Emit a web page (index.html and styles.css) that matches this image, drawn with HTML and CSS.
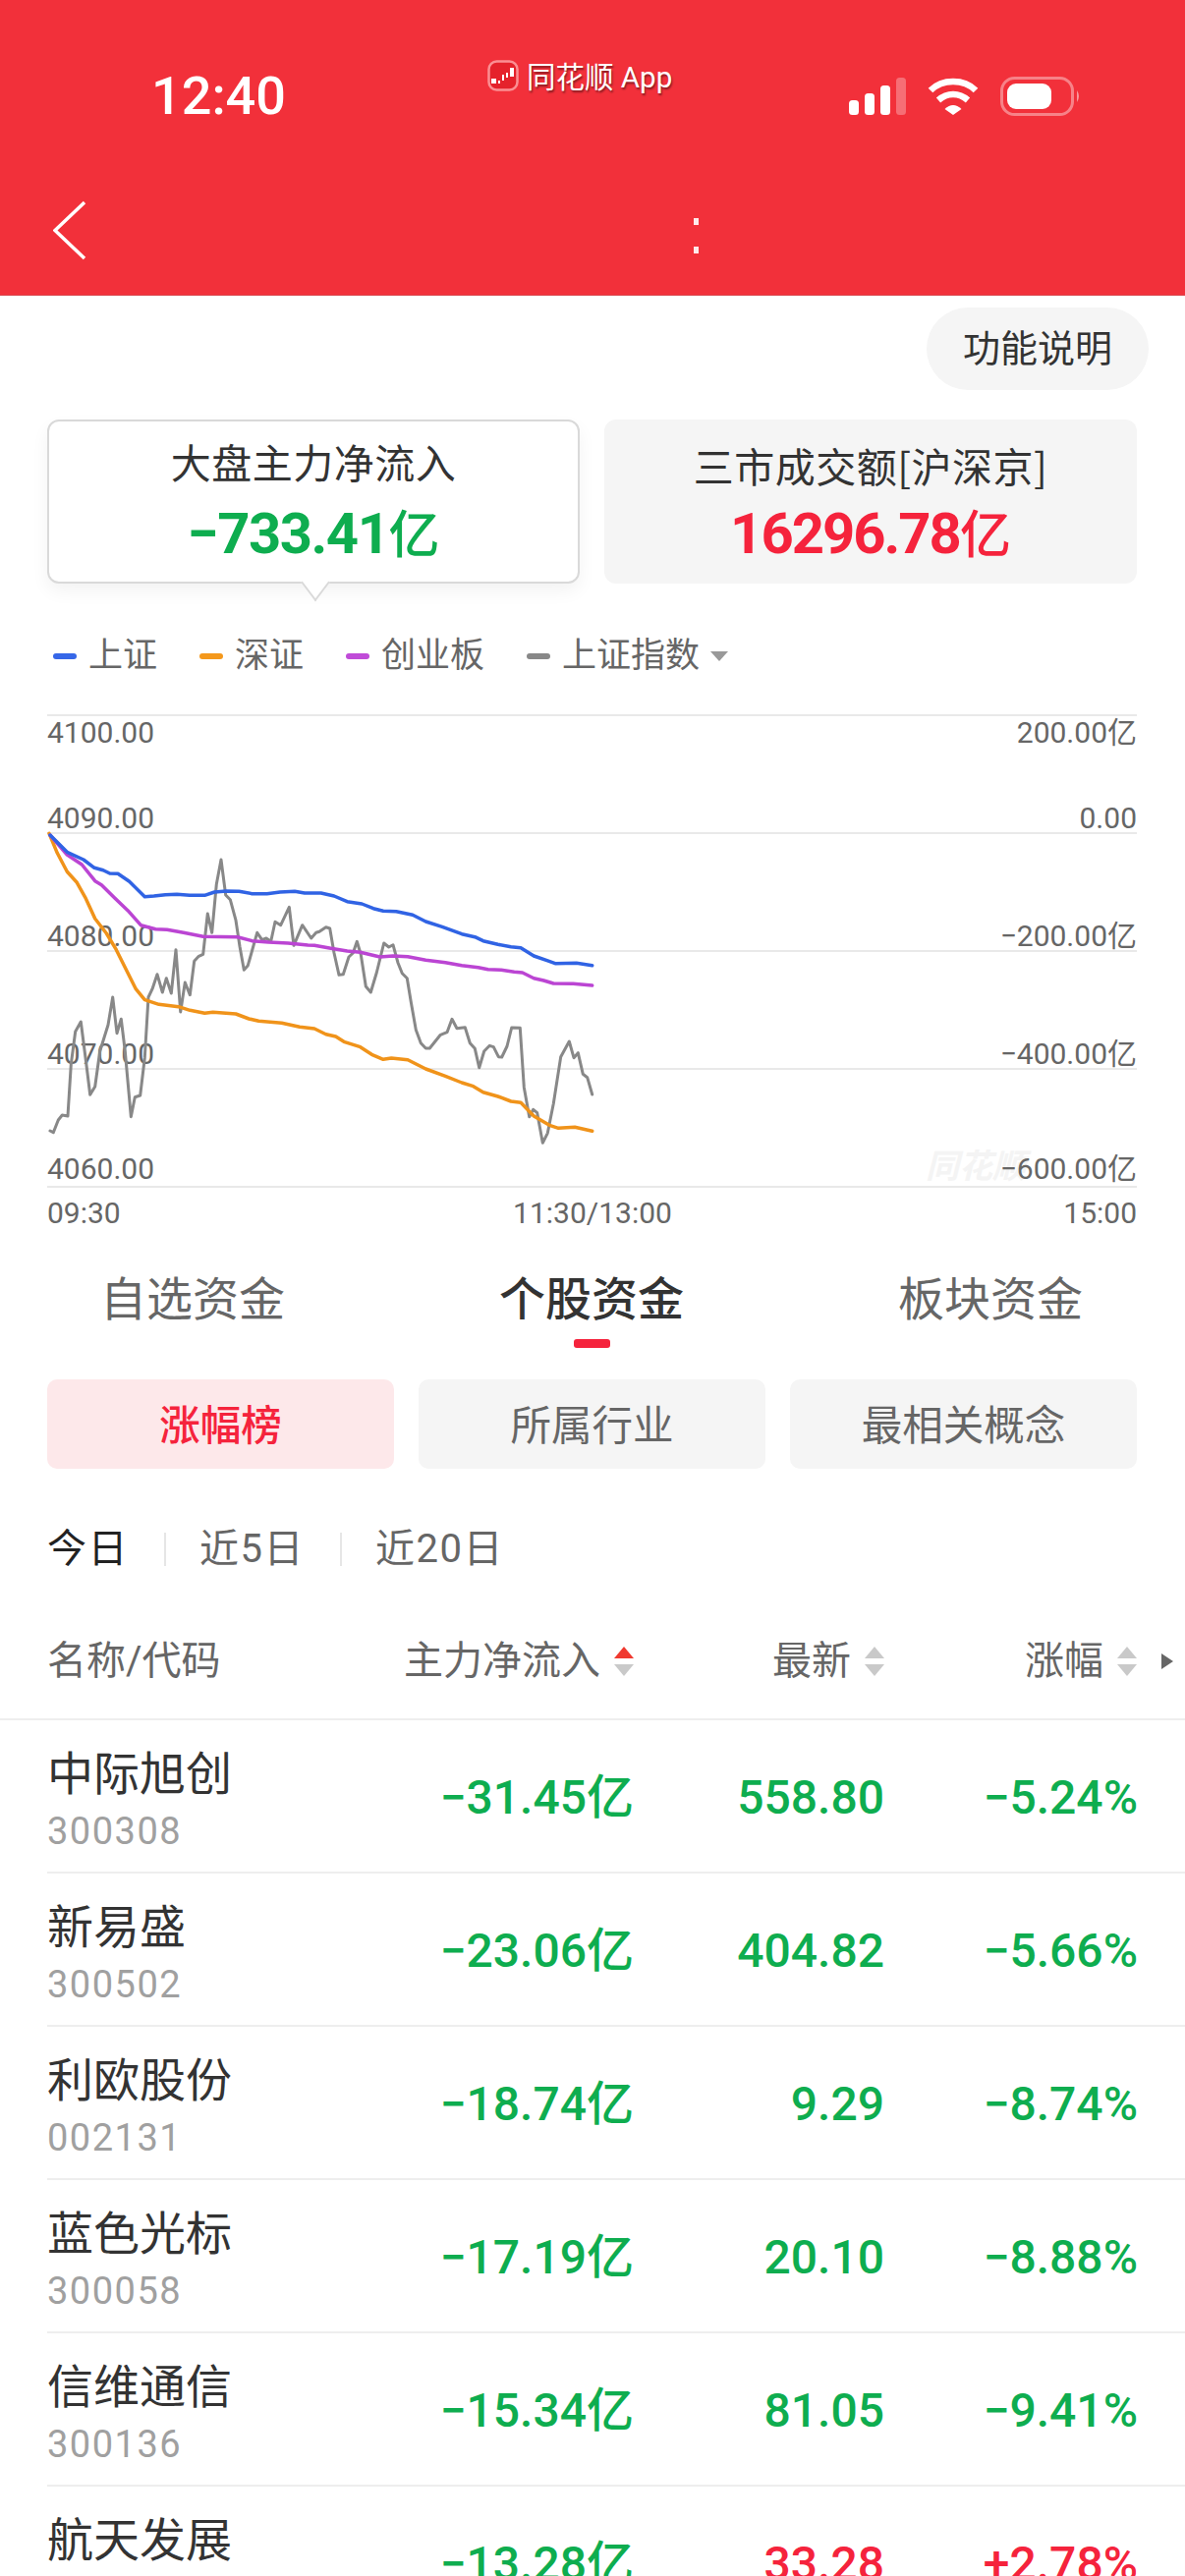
FILE: index.html
```html
<!DOCTYPE html>
<html lang="zh-CN">
<head>
    <meta charset="UTF-8" />
    <meta name="viewport" content="width=device-width, initial-scale=1" />
    <title>资金流向</title>
    <link rel="stylesheet" href="styles.css">
</head>
<body>
    <header class="top">
        <div class="status-bar">
            <span class="clock">12:40</span>
            <div class="brand">
                <svg class="brand-logo" width="32" height="32" viewBox="0 0 32 32">
                    <rect x="1.5" y="1.5" width="29" height="29" rx="8" fill="#e5222b" stroke="#fb8f93" stroke-width="2.5"/>
                    <path d="M4 19h5v5H4zM11 21h2v3h-2zM15 15h2v6h-2zM19 13h2v5h-2zM23 8h4v9h-4z" fill="#fff"/>
                </svg>
                <span class="brand-name">同花顺 App</span>
            </div>
            <div class="status-icons">
                <svg width="58" height="38" viewBox="0 0 58 38">
                    <rect x="0" y="23" width="10" height="15" rx="3.5" fill="#fff"/>
                    <rect x="16" y="16" width="10" height="22" rx="3.5" fill="#fff"/>
                    <rect x="32" y="8" width="10" height="30" rx="3.5" fill="#fff"/>
                    <rect x="48" y="0" width="10" height="38" rx="3.5" fill="#fff" opacity=".3"/>
                </svg>
                <svg width="52" height="38" viewBox="0 0 52 38">
                    <path d="M3 13C15 1 37 1 49 13" fill="none" stroke="#fff" stroke-width="6.5"/>
                    <path d="M11 23C20 15 32 15 41 23" fill="none" stroke="#fff" stroke-width="6.5"/>
                    <path d="M17.5 32Q26 24 34.5 32L26 38Z" fill="#fff"/>
                </svg>
                <svg width="82" height="40" viewBox="0 0 82 40">
                    <rect x="1.5" y="1.5" width="72" height="37" rx="13" fill="none" stroke="#fff" stroke-opacity=".4" stroke-width="3"/>
                    <rect x="7" y="7" width="45" height="26" rx="9" fill="#fff"/>
                    <path d="M78 14q4 6 0 12z" fill="#fff" opacity=".5"/>
                </svg>
            </div>
        </div>
        <nav class="nav-bar">
            <svg class="back" width="34" height="62" viewBox="0 0 34 62">
                <path d="M32 2L2 30.500L32 59" fill="none" stroke="#fff" stroke-width="3.500"/>
            </svg>
            <div class="nav-title"><i></i><i></i></div>
        </nav>
    </header>

    <main>
        <div class="help-row">
            <button class="help-btn">功能说明</button>
        </div>

        <div class="summary">
            <div class="summary-card active">
                <div class="summary-title">大盘主力净流入</div>
                <div class="summary-value down">−733.41<em>亿</em></div>
            </div>
            <div class="summary-card">
                <div class="summary-title cjk">三市成交额[沪深京]</div>
                <div class="summary-value up">16296.78<em>亿</em></div>
            </div>
        </div>

        <div class="legend">
            <span class="legend-item"><i class="dash blue"></i>上证</span>
            <span class="legend-item"><i class="dash orange"></i>深证</span>
            <span class="legend-item"><i class="dash purple"></i>创业板</span>
            <span class="legend-item"><i class="dash gray"></i>上证指数<b class="caret"></b></span>
        </div>

        <svg class="chart" width="1206" height="540" viewBox="0 720 1206 540">
            <g class="grid">
                <line x1="48" x2="1157" y1="728" y2="728"/>
                <line x1="48" x2="1157" y1="848" y2="848"/>
                <line x1="48" x2="1157" y1="968" y2="968"/>
                <line x1="48" x2="1157" y1="1088" y2="1088"/>
                <line x1="48" x2="1157" y1="1208" y2="1208"/>
            </g>
            <text class="watermark" x="942" y="1199">同花顺</text>
            <g class="axis">
                <text x="48" y="756">4100.00</text>
                <text x="48" y="843">4090.00</text>
                <text x="48" y="963">4080.00</text>
                <text x="48" y="1083">4070.00</text>
                <text x="48" y="1200">4060.00</text>
                <text x="48" y="1245">09:30</text>
                <text x="603" y="1245" text-anchor="middle">11:30/13:00</text>
            </g>
            <g class="axis" text-anchor="end">
                <text x="1157" y="756">200.00亿</text>
                <text x="1157" y="843">0.00</text>
                <text x="1157" y="963">−200.00亿</text>
                <text x="1157" y="1083">−400.00亿</text>
                <text x="1157" y="1200">−600.00亿</text>
                <text x="1157" y="1245">15:00</text>
            </g>
            <polyline class="line line-gray" points="51,1151 54.300,1152.700 59.300,1140 63.300,1135 69,1136 72.300,1083.300 76.700,1050 82.300,1040 88.300,1086.700 91.700,1114.300 96.700,1106 101.700,1070 110,1043.300 114.700,1015 119,1051.700 123.300,1037.300 127.300,1070 133.300,1136.700 137.300,1116.700 142.700,1115 147.300,1076.700 151,1015 155,1006.700 160,991.700 165.300,1010 169.300,995.700 174.300,1011 179,966.700 183.700,1030 188.300,1000 193.300,1012.700 197.700,978.300 202.300,973.300 206.700,971.300 211.300,930 215.700,949.300 220.300,900 225,875 229.700,911 234.300,915.700 240,936.700 244,963.300 248.300,987.300 252.300,982.700 261.700,949.300 266.700,956.700 271,955 275.700,958.300 280,938.300 285.700,941.700 294.300,923.300 299,962.300 307.700,941.700 316.700,955 321.700,949.300 325,948.300 331.700,943.700 335.700,945 340,970 345,992.300 349.300,991.700 355,974 359.300,970 363.300,958.300 367.300,971.700 372.300,1004 377.300,1010 383.300,990 390.700,960 395.700,964 400,961.700 405,980 409.300,990.700 414.300,995.700 418.300,1020 423.300,1048.300 428.300,1061.700 433.300,1067 437.300,1067 448.300,1053.300 455,1050.700 460,1037.300 465,1046.700 473.300,1045.700 478.300,1061.700 483.300,1067.300 487.700,1086.700 492.700,1070 498.300,1064.300 502.300,1065.700 507.300,1075.700 510.700,1076 516,1065 520.700,1046 529.300,1046.300 533.300,1106.700 538.700,1136.700 542.700,1129.300 546.700,1132.700 552.300,1163.300 557.300,1153.300 563.300,1123.300 570.700,1075.700 579.300,1060 584,1076.700 588.300,1071.700 593.300,1093.300 597.700,1096.700 602.700,1114"/>
            <polyline class="line line-orange" points="50,848.300 58.300,868.300 68.300,887.300 78.300,898.300 86.700,913.300 96.700,935 108.300,950 118.300,966.700 128.300,986.700 138.300,1006.700 147.300,1017.700 161.700,1022.300 181.700,1024.700 193.300,1028.300 208.300,1031.300 216.700,1030.300 240,1032 253.300,1037 263.300,1039.300 286.700,1041.300 305,1045.300 320,1047 331.700,1052.700 341.700,1055 350,1060.300 366.700,1065.700 378.300,1073.300 390,1078.300 398.300,1077 415,1078.700 433.300,1088 453.300,1095.300 470,1102 481.700,1105.700 491.700,1111.700 506.700,1116 520,1121 530,1122.300 543.300,1136 560,1145.700 568.300,1148.300 585,1147.300 602.700,1151.300"/>
            <polyline class="line line-purple" points="51,850 68.300,870 83.300,880 96.700,896.700 103.300,900.700 116.700,914 130,926.700 143.300,941.700 158.300,945.700 170,946.300 186.700,949.300 206.700,953.300 241.700,953.700 256.700,957.700 273.300,959 293.300,960 313.300,962 320,962.300 336.700,965.300 353.300,968 366.700,969.300 386.700,974 400,973 415,973.700 433.300,977.300 453.300,979.700 470,982.700 486.700,984.700 496.700,986.700 510,987.300 523.300,989.300 531.700,990 543.300,995.700 553.300,998 563.300,1001 583.300,1001.300 602.700,1003"/>
            <polyline class="line line-blue" points="51,850 68.300,867.300 85,875 96,883.300 105,885.700 111.700,889 120,889.300 131.700,897.300 147.300,912.700 156.700,912 168.300,910.700 180,910.300 193,911.300 208.300,911.300 218.300,908 230,907 243.300,907.300 256.700,909.700 271.700,909.700 285,908 300,907.300 310,909 326.700,909 340,912 353.300,917.700 368.300,920 380,924.700 390,927.300 403.300,927.700 420,931.300 433.300,938 450,943.300 470,950.700 483.300,953.700 491.700,957.700 506.700,961.300 520,963.700 530,964.700 543.300,973 556.700,977.700 565,980.700 586.700,980.300 602.700,982.700"/>
        </svg>

        <div class="tabs">
            <div class="tab">自选资金</div>
            <div class="tab active">个股资金</div>
            <div class="tab">板块资金</div>
        </div>

        <div class="sub-tabs">
            <div class="sub-tab active">涨幅榜</div>
            <div class="sub-tab">所属行业</div>
            <div class="sub-tab">最相关概念</div>
        </div>

        <div class="periods">
            <span class="period active">今日</span>
            <span class="period">近5日</span>
            <span class="period">近20日</span>
        </div>

        <div class="table-head">
            <span>名称/代码</span>
            <span class="sort">主力净流入<b class="sorter on"></b></span>
            <span class="sort">最新<b class="sorter"></b></span>
            <span class="sort">涨幅<b class="sorter"></b></span>
            <span class="more"></span>
        </div>

        <div class="row">
            <div class="stock"><div class="stock-name">中际旭创</div><div class="stock-code">300308</div></div>
            <div class="num down">−31.45亿</div>
            <div class="num down">558.80</div>
            <div class="num down">−5.24%</div>
        </div>
        <div class="row">
            <div class="stock"><div class="stock-name">新易盛</div><div class="stock-code">300502</div></div>
            <div class="num down">−23.06亿</div>
            <div class="num down">404.82</div>
            <div class="num down">−5.66%</div>
        </div>
        <div class="row">
            <div class="stock"><div class="stock-name">利欧股份</div><div class="stock-code">002131</div></div>
            <div class="num down">−18.74亿</div>
            <div class="num down">9.29</div>
            <div class="num down">−8.74%</div>
        </div>
        <div class="row">
            <div class="stock"><div class="stock-name">蓝色光标</div><div class="stock-code">300058</div></div>
            <div class="num down">−17.19亿</div>
            <div class="num down">20.10</div>
            <div class="num down">−8.88%</div>
        </div>
        <div class="row">
            <div class="stock"><div class="stock-name">信维通信</div><div class="stock-code">300136</div></div>
            <div class="num down">−15.34亿</div>
            <div class="num down">81.05</div>
            <div class="num down">−9.41%</div>
        </div>
        <div class="row">
            <div class="stock"><div class="stock-name">航天发展</div><div class="stock-code">000547</div></div>
            <div class="num down">−13.28亿</div>
            <div class="num up">33.28</div>
            <div class="num up">+2.78%</div>
        </div>
    </main>
</body>
</html>
```

FILE: styles.css
```css
html, body {
    height: 100%;
    overflow: hidden;
}
body {
    margin: 0;
    background-color: #ffffff;
    color: #333;
    font-family: Roboto, "Noto Sans CJK SC", sans-serif;
}
.up { color: #f5233c; }
.down { color: #0ead4f; }

/* red header */
.top {
    height: 300px;
    background-color: #f2303a;
    border-bottom: 1px solid #d9464d;
}
.status-bar {
    display: flex;
    align-items: flex-start;
    height: 204px;
    padding: 0 106px 0 154px;
    color: #fff;
}
.clock {
    margin-top: 67px;
    width: 133px;
    font-size: 54px;
    font-weight: 500;
    line-height: 62px;
    white-space: nowrap;
}
.brand {
    display: flex;
    align-items: center;
    gap: 8px;
    margin: 58px 0 0 209px;
    font-size: 29.500px;
    line-height: 32px;
    white-space: nowrap;
    text-shadow: 1px 2px 2px rgba(0,0,0,0.45);
}
.brand-name {
    padding-top: 5px;
}
.status-icons {
    display: flex;
    align-items: center;
    gap: 22px;
    margin: 78px 0 0 auto;
}
.nav-bar {
    display: flex;
    align-items: flex-start;
    padding-left: 54px;
}
.nav-title {
    display: flex;
    flex-direction: column;
    gap: 22px;
    margin: 18px 0 0 618px;
}
.nav-title i {
    display: block;
    width: 5px;
    height: 7px;
    background-color: #ffe9ea;
}

/* help button */
.help-row {
    display: flex;
    justify-content: flex-end;
    padding: 12px 37px 0 0;
}
.help-btn {
    width: 226px;
    height: 84px;
    padding: 0 0 7px;
    border: none;
    border-radius: 42px;
    background-color: #f5f5f5;
    color: #333;
    font-family: inherit;
    font-size: 38px;
}

/* summary cards */
.summary {
    display: grid;
    grid-template-columns: 542px 542px;
    gap: 25px;
    height: 167px;
    margin-top: 30px;
    padding-left: 48px;
}
.summary-card {
    position: relative;
    box-sizing: border-box;
    border-radius: 12px;
    background-color: #f5f5f5;
    text-align: center;
}
.summary-card.active {
    background-color: #fff;
    border: 2px solid #d9d9d9;
    box-shadow: 0 8px 18px rgba(0,0,0,0.05);
}
.summary-card.active::after {
    content: "";
    position: absolute;
    left: 259px;
    bottom: -13px;
    width: 22px;
    height: 22px;
    background-color: #fff;
    border-right: 2px solid #d9d9d9;
    border-bottom: 2px solid #d9d9d9;
    transform: rotate(45deg) skew(8deg, 8deg);
}
.summary-title {
    margin-top: 19px;
    font-size: 41px;
    line-height: 54px;
    letter-spacing: 0.5px;
}
.summary-title.cjk {
    font-family: "Noto Sans CJK SC", sans-serif;
}
.active .summary-title {
    margin-top: 17px;
}
.summary-value {
    margin-top: 10px;
    font-size: 58px;
    font-weight: 700;
    line-height: 66px;
    letter-spacing: -1.5px;
}
.summary-value.up {
    letter-spacing: -2px;
}
.summary-value em {
    font-style: normal;
    font-size: 52px;
    font-weight: 500;
    letter-spacing: 0;
}

/* legend */
.legend {
    display: flex;
    gap: 43px;
    height: 48px;
    margin-top: 50px;
    padding-left: 54px;
    color: #666;
    font-size: 35px;
    line-height: 48px;
}
.legend-item {
    display: flex;
    align-items: center;
    gap: 12px;
}
.dash {
    width: 24px;
    height: 6px;
    border-radius: 3px;
}
.dash.blue { background-color: #3667e8; }
.dash.orange { background-color: #f4981c; }
.dash.purple { background-color: #c04bd8; }
.dash.gray { background-color: #888; }
.caret {
    width: 0;
    height: 0;
    margin-left: -1px;
    border-left: 9px solid transparent;
    border-right: 9px solid transparent;
    border-top: 10px solid #999;
}

/* chart */
.chart {
    display: block;
    margin-top: 28px;
}
.grid line {
    stroke: #e2e2e2;
    stroke-width: 1.500;
}
.axis text {
    fill: #666;
    font-size: 30px;
}
.watermark {
    fill: #f4f4f4;
    font-size: 34px;
    font-style: italic;
    font-weight: 700;
}
.line {
    fill: none;
    stroke-width: 3.500;
    stroke-linejoin: round;
    stroke-linecap: round;
}
.line-gray { stroke: #888; stroke-width: 3; }
.line-orange { stroke: #f0931a; }
.line-purple { stroke: #bb45d3; }
.line-blue { stroke: #3063e4; }

/* tabs */
.tabs {
    display: flex;
    justify-content: space-between;
    margin-top: 33px;
    padding: 0 104px 0 102px;
}
.tab {
    position: relative;
    color: #666;
    font-size: 47px;
    line-height: 60px;
    padding-bottom: 19px;
}
.tab.active {
    color: #333;
    font-weight: 500;
}
.tab.active::after {
    content: "";
    position: absolute;
    left: 76px;
    bottom: 0;
    width: 37px;
    height: 9px;
    border-radius: 3px;
    background-color: #f5233c;
}
.sub-tabs {
    display: grid;
    grid-template-columns: repeat(3, 353px);
    gap: 25px;
    margin-top: 32px;
    padding-left: 48px;
}
.sub-tab {
    height: 91px;
    border-radius: 10px;
    background-color: #f5f5f5;
    color: #666;
    font-size: 41.500px;
    line-height: 95px;
    text-align: center;
}
.sub-tab.active {
    background-color: #fde8ea;
    color: #f5233c;
    font-weight: 500;
}

/* period filter */
.periods {
    display: flex;
    margin-top: 57px;
    padding-left: 48px;
    color: #666;
    font-size: 40px;
    line-height: 50px;
    letter-spacing: 1.500px;
}
.period + .period {
    margin-left: 36px;
    padding-left: 36px;
    background: linear-gradient(#e6e6e6, #e6e6e6) left center / 2px 34px no-repeat;
}
.period.active {
    color: #222;
}

/* table */
.table-head {
    display: grid;
    grid-template-columns: 357px 240px 255px 257px 37px;
    margin-top: 64px;
    padding: 0 12px 33px 48px;
    border-bottom: 2px solid #eee;
    color: #666;
    font-size: 40px;
    line-height: 50px;
}
.table-head > span {
    white-space: nowrap;
}
.sort {
    display: flex;
    align-items: center;
    justify-content: flex-end;
    gap: 14px;
}
.sorter {
    display: flex;
    flex-direction: column;
    gap: 6px;
}
.sorter::before, .sorter::after {
    content: "";
    width: 0;
    height: 0;
    border-left: 10px solid transparent;
    border-right: 10px solid transparent;
}
.sorter::before { border-bottom: 12px solid #c9c9c9; }
.sorter::after { border-top: 12px solid #c9c9c9; }
.sorter.on::before { border-bottom-color: #f0392f; }
.more {
    justify-self: end;
    align-self: center;
    width: 0;
    height: 0;
    border-top: 8px solid transparent;
    border-bottom: 8px solid transparent;
    border-left: 12px solid #666;
}
.row {
    display: grid;
    grid-template-columns: 357px 240px 255px 258px;
    align-items: center;
    height: 154px;
    margin-left: 48px;
    padding-right: 48px;
    border-bottom: 2px solid #eee;
}
.stock {
    padding-top: 8px;
}
.stock-name {
    color: #333;
    font-size: 47px;
    line-height: 56px;
}
.stock-code {
    margin-top: 8px;
    color: #a0a0a0;
    font-size: 38px;
    line-height: 44px;
    letter-spacing: 1.500px;
}
.num {
    padding-top: 3px;
    font-size: 48px;
    font-weight: 500;
    line-height: 60px;
    text-align: right;
    white-space: nowrap;
}
```
